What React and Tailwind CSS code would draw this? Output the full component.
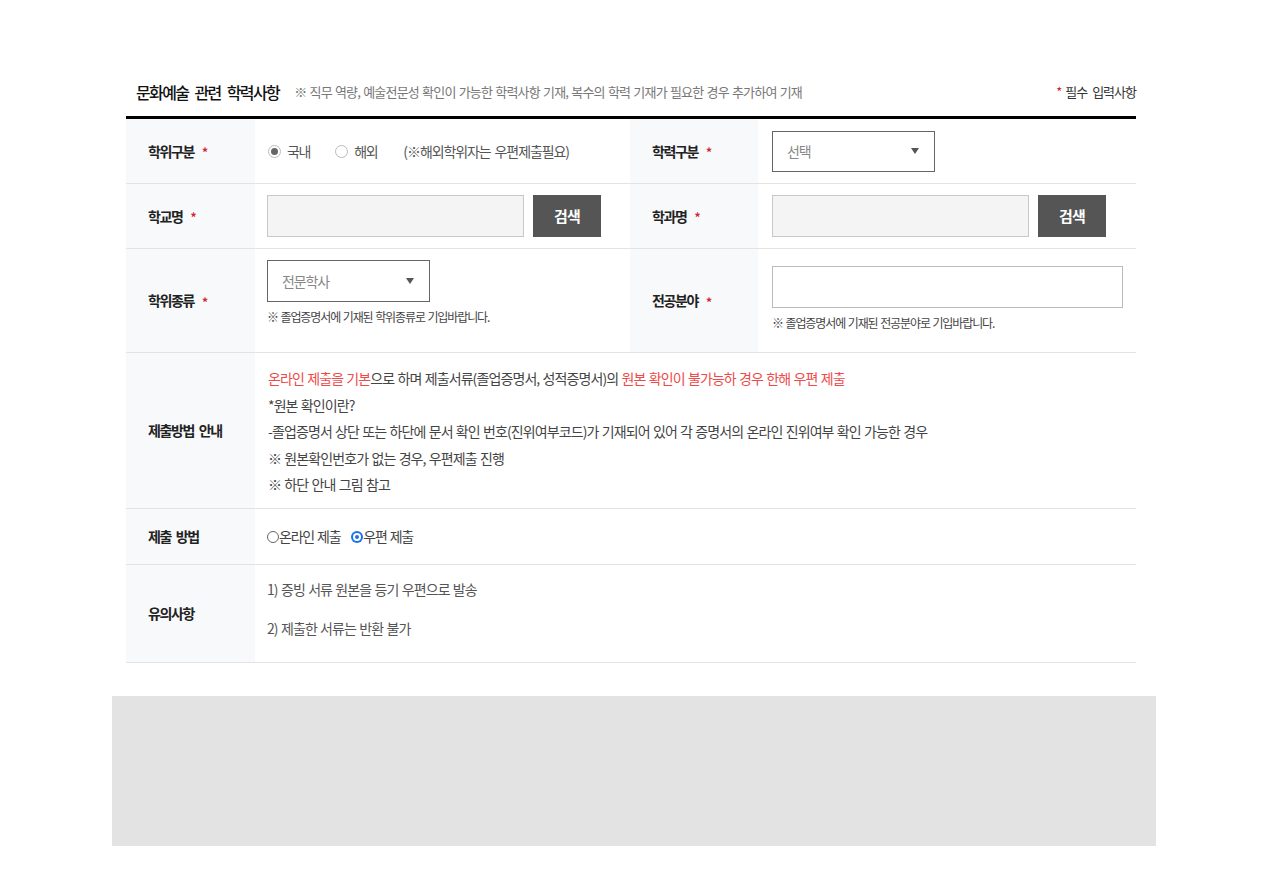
import { useState } from "react";

const Star = () => (
  <span className="ml-[8px] text-[12px] leading-none text-[#d3252d] relative top-[1px]">*</span>
);

const Label = ({ children, star = true }) => (
  <div className="flex items-center pl-[22px] bg-[#f8f9fb] text-[14px] font-bold text-[#222] tracking-[-1.4px] [word-spacing:3px]">
    {children}
    {star && <Star />}
  </div>
);

const Arrow = () => (
  <svg width="8" height="6" viewBox="0 0 8 6" className="shrink-0">
    <polygon points="0,0 8,0 4,6" fill="#555" />
  </svg>
);

const SelectBox = ({ value, className = "" }) => (
  <div
    className={`flex items-center justify-between pl-[14px] pr-[15px] border border-[#666] bg-white text-[14px] text-[#888] tracking-[-1.1px] ${className}`}
  >
    <span>{value}</span>
    <Arrow />
  </div>
);

const SearchField = () => (
  <div className="flex items-center gap-[9px]">
    <div className="w-[257px] h-[42px] bg-[#f4f4f4] border border-[#c8c8c8]" />
    <button className="w-[68px] h-[42px] bg-[#555555] text-white text-[15px] font-bold tracking-[-0.8px]">
      검색
    </button>
  </div>
);

const GrayRadio = ({ checked, label }) => (
  <label className="flex items-center gap-[6px] text-[14px] text-[#555] tracking-[-1.3px]">
    <span className="w-[13px] h-[13px] rounded-full border border-[#bbb] bg-white flex items-center justify-center">
      {checked && <span className="w-[7px] h-[7px] rounded-full bg-[#666]" />}
    </span>
    {label}
  </label>
);

const NativeRadio = ({ checked, label }) => (
  <label className="flex items-center text-[14px] text-[#444] tracking-[-1.2px] [word-spacing:1px]">
    {checked ? (
      <span className="w-[12px] h-[12px] rounded-full bg-[#1a73e8] flex items-center justify-center">
        <span className="w-[8px] h-[8px] rounded-full border-2 border-white bg-[#1a73e8]" />
      </span>
    ) : (
      <span className="w-[12px] h-[12px] rounded-full border border-[#666] bg-white" />
    )}
    {label}
  </label>
);

export default function App() {
  const [method] = useState("post");

  return (
    <div className="min-h-screen bg-white font-['Noto_Sans_CJK_KR',sans-serif] text-[#333]">
      <div className="pt-[78px] pl-[112px]">
        <section className="ml-[14px] w-[1010px]">
          {/* Title */}
          <div className="flex items-center justify-between h-[28px] pl-[10px]">
            <div className="flex items-center">
              <h2 className="text-[16px] font-medium text-[#111] tracking-[-1.6px] [word-spacing:4px]">
                문화예술 관련 학력사항
              </h2>
              <p className="ml-[15px] text-[13px] text-[#777] tracking-[-0.8px] [word-spacing:1px]">
                ※ 직무 역량, 예술전문성 확인이 가능한 학력사항 기재, 복수의 학력 기재가 필요한 경우 추가하여 기재
              </p>
            </div>
            <p className="text-[13px] text-[#333] tracking-[-1px] [word-spacing:3px]">
              <span className="text-[#d3252d] mr-[4px]">*</span>필수 입력사항
            </p>
          </div>

          <div className="mt-[10px] border-t-[3px] border-black">
            {/* Row 1 */}
            <div className="grid grid-cols-[129px_375px_128px_378px] h-[65px] border-b border-[#e3e3e3]">
              <Label>학위구분</Label>
              <div className="flex items-center pl-[13px]">
                <GrayRadio checked label="국내" />
                <div className="ml-[25px]">
                  <GrayRadio label="해외" />
                </div>
                <span className="ml-[26px] text-[14px] text-[#555] tracking-[-1.1px] [word-spacing:2px]">
                  (※해외학위자는 우편제출필요)
                </span>
              </div>
              <Label>학력구분</Label>
              <div className="flex items-center pl-[14px]">
                <SelectBox value="선택" className="w-[163px] h-[41px]" />
              </div>
            </div>

            {/* Row 2 */}
            <div className="grid grid-cols-[129px_375px_128px_378px] h-[65px] border-b border-[#e3e3e3]">
              <Label>학교명</Label>
              <div className="flex items-center pl-[12px]">
                <SearchField />
              </div>
              <Label>학과명</Label>
              <div className="flex items-center pl-[14px]">
                <SearchField />
              </div>
            </div>

            {/* Row 3 */}
            <div className="grid grid-cols-[129px_375px_128px_378px] h-[104px] border-b border-[#e3e3e3]">
              <Label>학위종류</Label>
              <div className="flex flex-col pl-[12px] pt-[11px]">
                <SelectBox value="전문학사" className="w-[163px] h-[42px]" />
                <p className="mt-[6px] text-[12px] leading-[17px] text-[#444] tracking-[-1.1px] [word-spacing:1px]">
                  ※ 졸업증명서에 기재된 학위종류로 기입바랍니다.
                </p>
              </div>
              <Label>전공분야</Label>
              <div className="flex flex-col pl-[14px] pt-[17px]">
                <div className="w-[351px] h-[42px] border border-[#bbb] bg-white" />
                <p className="mt-[6px] text-[12px] leading-[17px] text-[#444] tracking-[-1.1px] [word-spacing:1px]">
                  ※ 졸업증명서에 기재된 전공분야로 기입바랍니다.
                </p>
              </div>
            </div>

            {/* Row 4 */}
            <div className="grid grid-cols-[129px_881px] h-[156px] border-b border-[#e3e3e3]">
              <Label star={false}>제출방법 안내</Label>
              <div className="pl-[13px] pt-[12px] text-[14px] leading-[26.5px] text-[#444] tracking-[-0.9px] [word-spacing:1px]">
                <p>
                  <span className="text-[#ee4a4a]">온라인 제출을 기본</span>으로 하며 제출서류(졸업증명서, 성적증명서)의{" "}
                  <span className="text-[#ee4a4a]">원본 확인이 불가능하 경우 한해 우편 제출</span>
                </p>
                <p>*원본 확인이란?</p>
                <p>-졸업증명서 상단 또는 하단에 문서 확인 번호(진위여부코드)가 기재되어 있어 각 증명서의 온라인 진위여부 확인 가능한 경우</p>
                <p>※ 원본확인번호가 없는 경우, 우편제출 진행</p>
                <p>※ 하단 안내 그림 참고</p>
              </div>
            </div>

            {/* Row 5 */}
            <div className="grid grid-cols-[129px_881px] h-[56px] border-b border-[#e3e3e3]">
              <Label star={false}>제출 방법</Label>
              <div className="flex items-center pl-[12px] gap-[11px]">
                <NativeRadio checked={method === "online"} label="온라인 제출" />
                <NativeRadio checked={method === "post"} label="우편 제출" />
              </div>
            </div>

            {/* Row 6 */}
            <div className="grid grid-cols-[129px_881px] h-[98px] border-b border-[#e3e3e3]">
              <Label star={false}>유의사항</Label>
              <div className="pl-[12px] pt-[14px] flex flex-col gap-[19px] text-[14px] leading-[20px] text-[#555] tracking-[-0.9px] [word-spacing:1px]">
                <p>1) 증빙 서류 원본을 등기 우편으로 발송</p>
                <p>2) 제출한 서류는 반환 불가</p>
              </div>
            </div>
          </div>
        </section>

        {/* Guide image placeholder */}
        <div className="mt-[33px] w-[1044px] h-[150px] bg-[#e3e3e3]" />
      </div>
    </div>
  );
}
